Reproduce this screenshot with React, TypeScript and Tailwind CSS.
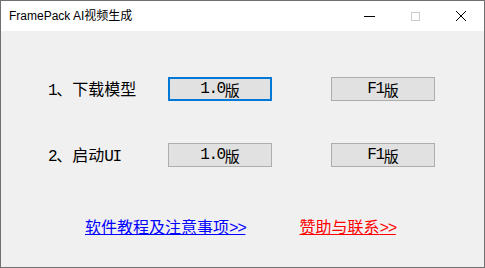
const cjk = { fontFamily: '"Noto Sans CJK SC", sans-serif' }
const mono = { fontFamily: '"Liberation Mono", monospace', fontSize: '16px', letterSpacing: '-1.4px' }

// ASCII runs in a half-width mono face, the rest in the CJK face
function Mixed({ text }: { text: string }) {
  const parts = text.split(/([\x20-\x7e]+)/).filter(Boolean)
  return (
    <>
      {parts.map((p, i) =>
        /^[\x20-\x7e]+$/.test(p) ? (
          <span key={i} style={mono}>
            {p}
          </span>
        ) : (
          <span key={i}>{p}</span>
        ),
      )}
    </>
  )
}

function WinButton({ label, focused }: { label: string; focused?: boolean }) {
  return (
    <button
      className={
        'flex h-[24px] w-[104px] items-center justify-center bg-[#e1e1e1] text-[15px] leading-none text-black ' +
        (focused ? 'border-2 border-[#0078d7]' : 'border border-[#adadad]')
      }
      style={cjk}
    >
      <Mixed text={label} />
    </button>
  )
}

function Row({ label, focused }: { label: string; focused?: boolean }) {
  return (
    <div className="flex items-center pl-[47px]">
      <span className="w-[120px] text-[16px] leading-none text-black" style={cjk}>
        <Mixed text={label} />
      </span>
      <WinButton label="1.0版" focused={focused} />
      <div className="ml-[59px]">
        <WinButton label="F1版" />
      </div>
    </div>
  )
}

export default function App() {
  return (
    <div className="flex h-[268px] w-[485px] flex-col border border-[#707070] bg-[#f0f0f0]">
      <div className="flex h-[30px] items-center bg-white">
        <span
          className="pl-[8px] text-[12px] text-black"
          style={{ fontFamily: '"Liberation Sans", "Noto Sans CJK SC", sans-serif' }}
        >
          FramePack AI视频生成
        </span>
        <div className="ml-auto flex h-full items-center">
          <div className="flex h-full w-[46px] items-center justify-center">
            <div className="h-px w-[11px] bg-black" />
          </div>
          <div className="flex h-full w-[46px] items-center justify-center">
            <div className="h-[9px] w-[9px] border border-[#cccccc]" />
          </div>
          <div className="flex h-full w-[46px] items-center justify-center">
            <svg width="12" height="12" viewBox="0 0 12 12">
              <path d="M1 1L11 11M11 1L1 11" stroke="#000" strokeWidth="1" />
            </svg>
          </div>
        </div>
      </div>
      <div className="flex flex-1 flex-col pt-[46px]">
        <Row label="1、下载模型" focused />
        <div className="mt-[42px]">
          <Row label="2、启动UI" />
        </div>
        <div className="mt-[51px] flex text-[16px] leading-none" style={cjk}>
          <a className="ml-[84px] text-[#0000ff] underline">
            <Mixed text="软件教程及注意事项>>" />
          </a>
          <a className="ml-[54px] text-[#ff0000] underline">
            <Mixed text="赞助与联系>>" />
          </a>
        </div>
      </div>
    </div>
  )
}
